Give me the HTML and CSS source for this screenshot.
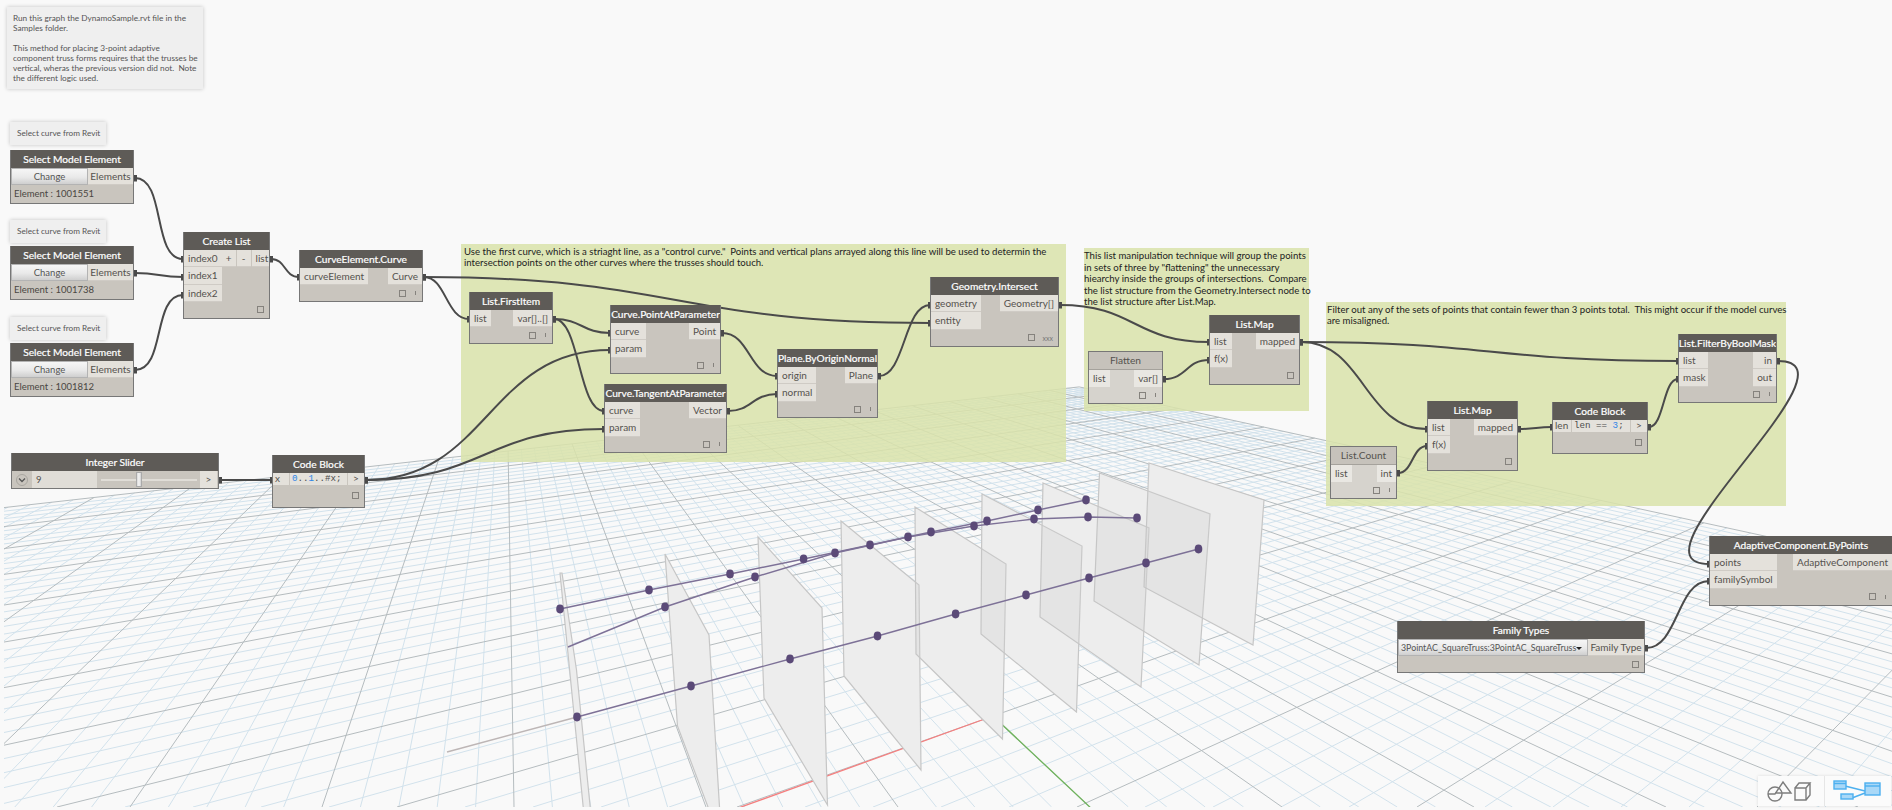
FILE: index.html
```html
<!DOCTYPE html>
<html lang="en">
<head>
  <meta charset="UTF-8">
  <title>Dynamo graph</title>
  <link rel="stylesheet" href="styles.css">
</head>
<body>
  <div class="canvas">

    <!-- background 3d preview -->
    <svg class="scene" viewBox="4 0 1888 807">
      <g id="gridlines"></g>
      <line class="axis axis--x" x1="993" y1="716" x2="730" y2="811"/>
      <line class="axis axis--y" x1="993" y1="716" x2="1094" y2="811"/>
      <polyline class="curve-ext" points="447,752 577,717"/>
      <g class="planes-back">
        <polygon points="560,573 562,573 576.5,670 591,815 584,815"/>
        <polygon points="665,554 709,635 720,815 711,815 677.5,726"/>
        <polygon points="758,537 822,608 827.5,805 764,698"/>
        <polygon points="841,521 919,585 921,770 844,676"/>
        <polygon points="915,507 1006,564 1002.5,739 916,654"/>
        <polygon points="982,494 1082,546 1076.5,712 981,634"/>
        <polygon points="1043,483 1149,528 1141,687 1040,617"/>
        <polygon points="1099.5,473 1210,514 1199,665 1094,601"/>
        <polygon points="1149,463 1264,500 1253,645 1144,587"/>
      </g>
      <g class="planes">
        <polygon points="560,573 562,573 576.5,670 591,815 584,815"/>
        <polygon points="665,554 709,635 720,815 711,815 677.5,726"/>
        <polygon points="758,537 822,608 827.5,805 764,698"/>
        <polygon points="841,521 919,585 921,770 844,676"/>
        <polygon points="915,507 1006,564 1002.5,739 916,654"/>
        <polygon points="982,494 1082,546 1076.5,712 981,634"/>
        <polygon points="1043,483 1149,528 1141,687 1040,617"/>
        <polygon points="1099.5,473 1210,514 1199,665 1094,601"/>
        <polygon points="1149,463 1264,500 1253,645 1144,587"/>
      </g>
      <polyline class="truss" points="560,609 649,590 730,574 803.6,559 870,545 931,532 987,521 1038,510 1086,500"/>
      <polyline class="truss" points="568,647 665,607 755,577 835,553 908,537 974,526 1034,519 1088,517 1137,518"/>
      <polyline class="truss" points="577,717 691,686 790,659 877.5,636 955.6,614 1026,595 1089,578 1146,563 1198.5,549"/>
      <g class="dots">
        <ellipse cx="560" cy="609" rx="3.8" ry="4.4"/><ellipse cx="649" cy="590" rx="3.8" ry="4.4"/><ellipse cx="730" cy="574" rx="3.8" ry="4.4"/>
        <ellipse cx="803.6" cy="559" rx="3.8" ry="4.4"/><ellipse cx="870" cy="545" rx="3.8" ry="4.4"/><ellipse cx="931" cy="532" rx="3.8" ry="4.4"/>
        <ellipse cx="987" cy="521" rx="3.8" ry="4.4"/><ellipse cx="1038" cy="510" rx="3.8" ry="4.4"/><ellipse cx="1086" cy="500" rx="3.8" ry="4.4"/>
        <ellipse cx="665" cy="607" rx="3.8" ry="4.4"/><ellipse cx="755" cy="577" rx="3.8" ry="4.4"/><ellipse cx="835" cy="553" rx="3.8" ry="4.4"/>
        <ellipse cx="908" cy="537" rx="3.8" ry="4.4"/><ellipse cx="974" cy="526" rx="3.8" ry="4.4"/><ellipse cx="1034" cy="519" rx="3.8" ry="4.4"/>
        <ellipse cx="1088" cy="517" rx="3.8" ry="4.4"/><ellipse cx="1137" cy="518" rx="3.8" ry="4.4"/>
        <ellipse cx="577" cy="717" rx="3.8" ry="4.4"/><ellipse cx="691" cy="686" rx="3.8" ry="4.4"/><ellipse cx="790" cy="659" rx="3.8" ry="4.4"/>
        <ellipse cx="877.5" cy="636" rx="3.8" ry="4.4"/><ellipse cx="955.6" cy="614" rx="3.8" ry="4.4"/><ellipse cx="1026" cy="595" rx="3.8" ry="4.4"/>
        <ellipse cx="1089" cy="578" rx="3.8" ry="4.4"/><ellipse cx="1146" cy="563" rx="3.8" ry="4.4"/><ellipse cx="1198.5" cy="549" rx="3.8" ry="4.4"/>
      </g>
    </svg>

    <!-- groups -->
    <div class="group group-a">Use the first curve, which is a striaght line, as a "control curve."&nbsp; Points and vertical plans arrayed along this line will be used to determin the<br>intersection points on the other curves where the trusses should touch.</div>
    <div class="group group-b">This list manipulation technique will group the points<br>in sets of three by "flattening" the unnecessary<br>hiearchy inside the groups of intersections.&nbsp; Compare<br>the list structure from the Geometry.Intersect node to<br>the list structure after List.Map.</div>
    <div class="group group-c">Filter out any of the sets of points that contain fewer than 3 points total.&nbsp; This might occur if the model curves<br>are misaligned.</div>

    <!-- notes -->
    <div class="note note-top">Run this graph the DynamoSample.rvt file in the<br>Samples folder.<br><br>This method for placing 3-point adaptive<br>component truss forms requires that the trusses be<br>vertical, wheras the previous version did not.&nbsp; Note<br>the different logic used.</div>
    <div class="note note-small note-1">Select curve from Revit</div>
    <div class="note note-small note-2">Select curve from Revit</div>
    <div class="note note-small note-3">Select curve from Revit</div>

    <!-- wires -->
    <svg class="wires" viewBox="0 0 1892 810">
      <defs>
        <marker id="nub" markerUnits="userSpaceOnUse" markerWidth="4" markerHeight="7" refX="2" refY="3.5" orient="auto">
          <rect width="4" height="7" fill="#4a4a4a"/>
        </marker>
      </defs>
      <path d="M135 178C166 178 152 259 183 259"/>
      <path d="M135 273C160 273 158 277 183 277"/>
      <path d="M135 370C166 370 152 295 183 295"/>
      <path d="M271 259C286 259 284 277 299 277"/>
      <path d="M424 277C676 277 676 323 930 323"/>
      <path d="M424 277C446 277 446 319 469 319"/>
      <path d="M554 319C582 319 582 333 610 333"/>
      <path d="M554 319C580 319 578 411 604 411"/>
      <path d="M366 480C488 480 488 350 610 350"/>
      <path d="M366 480C486 480 484 429 604 429"/>
      <path d="M722 333C750 333 749 376 777 376"/>
      <path d="M728 411C752 411 752 394 777 394"/>
      <path d="M879 376C905 376 904 305 930 305"/>
      <path d="M1060 305C1135 305 1134 342 1209 342"/>
      <path d="M1164 379C1187 379 1186 360 1209 360"/>
      <path d="M1301 342C1490 342 1489 361 1678 361"/>
      <path d="M1301 342C1364 342 1364 429 1427 429"/>
      <path d="M1398 473C1413 473 1412 446 1427 446"/>
      <path d="M1519 429C1536 429 1536 427 1552 427"/>
      <path d="M1649 427C1664 427 1663 379 1678 379"/>
      <path d="M1778 361C1868 361 1619 564 1709 564"/>
      <path d="M1646 648C1678 648 1677 581 1709 581"/>
      <path d="M220 480C246 480 246 480 272 480"/>
    </svg>

    <!-- nodes -->
    <div class="node n-select-1">
      <div class="node__title">Select Model Element</div>
      <div class="node__body">
        <button class="btn btn--change">Change</button>
        <span class="port port--out">Elements</span>
      </div>
      <div class="node__info">Element : 1001551</div>
    </div>
    <div class="node n-select-2">
      <div class="node__title">Select Model Element</div>
      <div class="node__body">
        <button class="btn btn--change">Change</button>
        <span class="port port--out">Elements</span>
      </div>
      <div class="node__info">Element : 1001738</div>
    </div>
    <div class="node n-select-3">
      <div class="node__title">Select Model Element</div>
      <div class="node__body">
        <button class="btn btn--change">Change</button>
        <span class="port port--out">Elements</span>
      </div>
      <div class="node__info">Element : 1001812</div>
    </div>

    <div class="node n-create-list">
      <div class="node__title">Create List</div>
      <div class="node__body">
        <div class="node__col">
          <span class="port">index0</span>
          <span class="port">index1</span>
          <span class="port">index2</span>
        </div>
        <div class="node__row">
          <span class="port port--btn">+</span>
          <span class="port port--btn">-</span>
          <span class="port">list</span>
        </div>
      </div>
      <div class="node__foot"><i class="box"></i></div>
    </div>

    <div class="node n-curve-element">
      <div class="node__title">CurveElement.Curve</div>
      <div class="node__body">
        <div class="node__col"><span class="port">curveElement</span></div>
        <div class="node__col"><span class="port">Curve</span></div>
      </div>
      <div class="node__foot"><i class="box"></i><i class="tick"></i></div>
    </div>

    <div class="node n-slider">
      <div class="node__title">Integer Slider</div>
      <div class="slider">
        <span class="slider__toggle">
          <svg width="8" height="6" viewBox="0 0 8 6"><path d="M1 1.5L4 4.5L7 1.5" fill="none" stroke="#555" stroke-width="1.3"/></svg>
        </span>
        <span class="slider__value">9</span>
        <span class="slider__track"><i class="slider__thumb"></i></span>
        <span class="port slider__out">&gt;</span>
      </div>
    </div>

    <div class="node n-code-1">
      <div class="node__title">Code Block</div>
      <div class="code">
        <span class="port port--code">x</span>
        <span class="code__text code__text--a"><b>0</b>..<b>1</b>..#x;</span>
        <span class="port port--code code__out">&gt;</span>
      </div>
      <div class="node__foot node__foot--code"><i class="box"></i></div>
    </div>

    <div class="node n-first-item">
      <div class="node__title">List.FirstItem</div>
      <div class="node__body">
        <div class="node__col"><span class="port">list</span></div>
        <div class="node__col"><span class="port">var[]..[]</span></div>
      </div>
      <div class="node__foot"><i class="box"></i><i class="tick"></i></div>
    </div>

    <div class="node n-point-at">
      <div class="node__title">Curve.PointAtParameter</div>
      <div class="node__body">
        <div class="node__col"><span class="port">curve</span><span class="port">param</span></div>
        <div class="node__col"><span class="port">Point</span></div>
      </div>
      <div class="node__foot"><i class="box"></i><i class="tick"></i></div>
    </div>

    <div class="node n-tangent-at">
      <div class="node__title">Curve.TangentAtParameter</div>
      <div class="node__body">
        <div class="node__col"><span class="port">curve</span><span class="port">param</span></div>
        <div class="node__col"><span class="port">Vector</span></div>
      </div>
      <div class="node__foot"><i class="box"></i><i class="tick"></i></div>
    </div>

    <div class="node n-plane">
      <div class="node__title">Plane.ByOriginNormal</div>
      <div class="node__body">
        <div class="node__col"><span class="port">origin</span><span class="port">normal</span></div>
        <div class="node__col"><span class="port">Plane</span></div>
      </div>
      <div class="node__foot"><i class="box"></i><i class="tick"></i></div>
    </div>

    <div class="node n-intersect">
      <div class="node__title">Geometry.Intersect</div>
      <div class="node__body">
        <div class="node__col"><span class="port">geometry</span><span class="port">entity</span></div>
        <div class="node__col"><span class="port">Geometry[]</span></div>
      </div>
      <div class="node__foot"><i class="box"></i><i class="xxx">xxx</i></div>
    </div>

    <div class="node node--ref n-flatten">
      <div class="node__title">Flatten</div>
      <div class="node__body">
        <div class="node__col"><span class="port">list</span></div>
        <div class="node__col"><span class="port">var[]</span></div>
      </div>
      <div class="node__foot"><i class="box"></i><i class="tick"></i></div>
    </div>

    <div class="node n-map-1">
      <div class="node__title">List.Map</div>
      <div class="node__body">
        <div class="node__col"><span class="port">list</span><span class="port">f(x)</span></div>
        <div class="node__col"><span class="port">mapped</span></div>
      </div>
      <div class="node__foot"><i class="box"></i></div>
    </div>

    <div class="node node--ref n-count">
      <div class="node__title">List.Count</div>
      <div class="node__body">
        <div class="node__col"><span class="port">list</span></div>
        <div class="node__col"><span class="port">int</span></div>
      </div>
      <div class="node__foot"><i class="box"></i><i class="tick"></i></div>
    </div>

    <div class="node n-map-2">
      <div class="node__title">List.Map</div>
      <div class="node__body">
        <div class="node__col"><span class="port">list</span><span class="port">f(x)</span></div>
        <div class="node__col"><span class="port">mapped</span></div>
      </div>
      <div class="node__foot"><i class="box"></i></div>
    </div>

    <div class="node n-code-2">
      <div class="node__title">Code Block</div>
      <div class="code">
        <span class="port port--code port--len">len</span>
        <span class="code__text code__text--b">len == <b>3</b>;</span>
        <span class="port port--code code__out">&gt;</span>
      </div>
      <div class="node__foot node__foot--code"><i class="box"></i></div>
    </div>

    <div class="node n-filter">
      <div class="node__title">List.FilterByBoolMask</div>
      <div class="node__body">
        <div class="node__col node__col--mask"><span class="port">list</span><span class="port">mask</span></div>
        <div class="node__col"><span class="port">in</span><span class="port">out</span></div>
      </div>
      <div class="node__foot"><i class="box"></i><i class="tick"></i></div>
    </div>

    <div class="node n-adaptive">
      <div class="node__title">AdaptiveComponent.ByPoints</div>
      <div class="node__body">
        <div class="node__col"><span class="port">points</span><span class="port">familySymbol</span></div>
        <div class="node__col"><span class="port">AdaptiveComponent</span></div>
      </div>
      <div class="node__foot"><i class="box"></i><i class="tick"></i></div>
    </div>

    <div class="node n-family">
      <div class="node__title">Family Types</div>
      <div class="node__body">
        <span class="btn btn--select">3PointAC_SquareTruss:3PointAC_SquareTruss<i class="caret"></i></span>
        <span class="port port--out">Family Type</span>
      </div>
      <div class="node__foot"><i class="box"></i></div>
    </div>

    <!-- geometry / graph switch -->
    <div class="view-switch">
      <div class="view-switch__cell">
        <svg width="50" height="24" viewBox="0 0 50 24" fill="none" stroke="#7d7d7d" stroke-width="1.4">
          <circle cx="9" cy="15" r="7"/>
          <path d="M2 15H9L17 3L25 14H9"/>
          <path d="M29 9H40V21H29ZM29 9L33 4H44L40 9M44 4V16L40 21"/>
        </svg>
      </div>
      <div class="view-switch__cell">
        <svg width="52" height="24" viewBox="0 0 52 24" fill="#a9d8f7" stroke="#4db0ef" stroke-width="1.4">
          <path d="M13 7L33 12M20 19L33 14" fill="none"/>
          <rect x="2" y="2" width="12" height="8"/>
          <path d="M2 4.5H14" fill="none"/>
          <rect x="9" y="15" width="12" height="5"/>
          <rect x="33" y="4" width="15" height="12"/>
          <path d="M33 7H48" fill="none"/>
        </svg>
      </div>
    </div>
  </div>

  <script src="grid.js"></script>
</body>
</html>
```

FILE: styles.css
```css
html, body {
  margin: 0;
  height: 100%;
  overflow: hidden;
}

body {
  background: #f9f9f9;
  font-family: "Lato", "Open Sans", sans-serif;
  color: #4b4b4b;
}

.canvas {
  position: relative;
  width: 1892px;
  height: 810px;
  overflow: hidden;
}

/* 3d preview */
.scene {
  position: absolute;
  left: 4px;
  top: 0;
  width: 1888px;
  height: 807px;
}

.grid-minor {
  stroke: #d2e2ec;
  stroke-width: 1;
}

.grid-major {
  stroke: #b5bcbf;
  stroke-width: 1;
}

.axis {
  stroke-width: 1.3;
}

.axis--x {
  stroke: #f57f7f;
}

.axis--y {
  stroke: #6fb35c;
}

.curve-ext {
  stroke: #bdb6b6;
  stroke-width: 1.5;
  fill: none;
}

.planes-back polygon {
  fill: #f9f9f9;
}

.planes polygon {
  fill: #d0d0d0;
  fill-opacity: 0.3;
  stroke: #c6c6c6;
  stroke-width: 1.2;
}

.truss {
  fill: none;
  stroke: #7d7197;
  stroke-width: 1.4;
}

.dots ellipse {
  fill: #5b4a78;
}

/* groups */
.group {
  position: absolute;
  box-sizing: border-box;
  background: rgba(217, 227, 170, 0.85);
  color: #222;
  font-size: 9.6px;
  line-height: 11.2px;
  padding: 2px 1px 0 3px;
  white-space: nowrap;
}

.group-a {
  left: 461px;
  top: 244px;
  width: 605px;
  height: 218px;
}

.group-b {
  left: 1084px;
  top: 248px;
  width: 225px;
  height: 163px;
  padding-left: 0;
  line-height: 11.5px;
}

.group-c {
  left: 1326px;
  top: 302px;
  width: 460px;
  height: 204px;
  padding-left: 1px;
}

/* notes */
.note {
  position: absolute;
  box-sizing: border-box;
  background: #efefef;
  box-shadow: 0 0 4px rgba(0, 0, 0, 0.22);
  color: #555;
  white-space: nowrap;
}

.note-top {
  left: 7px;
  top: 7px;
  width: 196px;
  height: 82px;
  padding: 6px 0 0 6px;
  font-size: 8.25px;
  line-height: 10px;
}

.note-small {
  left: 10px;
  width: 96px;
  height: 23px;
  padding-left: 7px;
  font-size: 8.2px;
  line-height: 23px;
}

.note-1 { top: 122px; }
.note-2 { top: 220px; }
.note-3 { top: 317px; }

/* wires */
.wires {
  position: absolute;
  left: 0;
  top: 0;
  width: 1892px;
  height: 810px;
}

.wires path {
  fill: none;
  stroke: #4a4a4a;
  stroke-width: 2;
  marker-start: url(#nub);
  marker-end: url(#nub);
}

/* nodes */
.node {
  position: absolute;
  box-sizing: border-box;
  display: flex;
  flex-direction: column;
  background: #c9c5be;
  border: 1px solid #777;
  border-top: 0;
  font-size: 10px;
  color: #55524e;
  overflow: hidden;
}

.node__title {
  height: 18px;
  flex: none;
  margin: 0 -1px;
  background: #5e5b57;
  color: #fff;
  font-size: 10.2px;
  -webkit-text-stroke: 0.2px #fff;
  line-height: 18px;
  text-align: center;
  white-space: nowrap;
}

.node__body {
  display: flex;
  justify-content: space-between;
  flex: none;
}

.node__col {
  display: flex;
  flex-direction: column;
}

.node__row {
  display: flex;
  gap: 1px;
}

.port {
  box-sizing: border-box;
  display: block;
  height: 17.33px;
  padding: 0 4px;
  background: #e4e1db;
  border-bottom: 1px solid #cfcbc5;
  line-height: 16px;
  white-space: nowrap;
}

.node__col:last-child .port {
  text-align: right;
}

.port--btn {
  width: 14px;
  padding: 0;
  text-align: center;
}

.port--out {
  flex: 1;
  text-align: center;
  padding: 0 1px;
}

.node__foot {
  flex: 1;
  display: flex;
  justify-content: flex-end;
  align-items: center;
  gap: 8px;
  padding-right: 5px;
}

.node__foot--code {
  padding-bottom: 1px;
}

.box {
  width: 5px;
  height: 5px;
  border: 1px solid #85827d;
}

.tick {
  width: 1px;
  height: 4px;
  margin: 0 1px;
  background: #85827d;
}

.xxx {
  font-size: 7px;
  font-style: normal;
  color: #777;
}

.node__info {
  flex: 1;
  padding-left: 3px;
  font-size: 9.5px;
  line-height: 17px;
  color: #4a4742;
  white-space: nowrap;
}

.node--ref {
  background: #d6d3cd;
  border-top: 1px solid #777;
}

.node--ref .node__title {
  height: 17px;
  background: #c6c2bb;
  border-bottom: 1px solid #a5a29c;
  color: #55524e;
  -webkit-text-stroke: 0;
  line-height: 17px;
}

.node--ref .port {
  background: #e9e7e2;
  border-bottom: 0;
}

.btn {
  box-sizing: border-box;
  display: block;
  height: 17px;
  padding: 0;
  border: 1px solid #b3b3b3;
  background: linear-gradient(#f6f6f6, #e9e9e9 55%, #cfcfcf);
  color: #555;
  font: inherit;
  font-size: 9.5px;
  line-height: 15px;
  text-align: center;
}

.btn--change {
  width: 77px;
}

.btn--select {
  position: relative;
  width: 190px;
  padding-left: 2px;
  font-size: 8.8px;
  text-align: left;
  white-space: nowrap;
}

.caret {
  position: absolute;
  right: 5px;
  top: 7px;
  border: 3px solid transparent;
  border-top-color: #222;
  border-bottom: 0;
}

/* slider */
.slider {
  display: flex;
  align-items: stretch;
  height: 17px;
}

.slider__toggle {
  flex: none;
  box-sizing: border-box;
  width: 12px;
  height: 12px;
  margin: 3px 4px 0 4px;
  border: 1px solid #aaa7a1;
  border-radius: 50%;
  display: flex;
  align-items: center;
  justify-content: center;
}

.slider__value {
  flex: none;
  width: 65px;
  background: #e0ddd7;
  padding-left: 4px;
  box-sizing: border-box;
  line-height: 17px;
  font-size: 9.5px;
}

.slider__track {
  flex: none;
  position: relative;
  width: 96px;
  height: 2px;
  margin: 8px 3px 0 4px;
  background: #e0ddd7;
}

.slider__thumb {
  position: absolute;
  left: 35px;
  top: -7px;
  width: 6px;
  height: 15px;
  background: linear-gradient(90deg, #d9d9d9, #f5f5f5, #cfcfcf);
  border: 1px solid #aaa;
  box-sizing: border-box;
}

.slider__out {
  flex: none;
  width: 17px;
  height: 17px;
  padding: 0;
  text-align: center;
  border-bottom: 0;
}

/* code blocks */
.code {
  display: flex;
  gap: 1px;
  height: 12px;
}

.port--code {
  flex: none;
  width: 16px;
  height: 12px;
  padding: 0 0 0 2px;
  line-height: 11px;
  border-bottom: 0;
}

.port--len {
  width: 18px;
}

.code__text {
  flex: 1;
  background: #e4e1db;
  font-family: "Liberation Mono", monospace;
  font-size: 9.2px;
  line-height: 11px;
  padding-left: 2px;
  color: #4a4a4a;
  white-space: nowrap;
}

.code__text b {
  font-weight: 400;
  color: #2e84e6;
}

.code__out {
  padding: 0;
  text-align: center;
  width: 16px;
}

.node__col--mask {
  width: 29px;
}

/* where each node sits on the graph */
.n-select-1 { left: 10px; top: 150px; width: 124px; height: 54px; }
.n-select-2 { left: 10px; top: 246px; width: 124px; height: 54px; }
.n-select-3 { left: 10px; top: 343px; width: 124px; height: 54px; }
.n-create-list { left: 183px; top: 232px; width: 87px; height: 87px; }
.n-curve-element { left: 299px; top: 250px; width: 124px; height: 52px; }
.n-slider { left: 11px; top: 453px; width: 208px; height: 36px; }
.n-code-1 { left: 272px; top: 455px; width: 93px; height: 53px; }
.n-first-item { left: 469px; top: 292px; width: 84px; height: 52px; }
.n-point-at { left: 610px; top: 305px; width: 111px; height: 69px; }
.n-tangent-at { left: 604px; top: 384px; width: 123px; height: 69px; }
.n-plane { left: 777px; top: 349px; width: 101px; height: 69px; }
.n-intersect { left: 930px; top: 277px; width: 129px; height: 70px; }
.n-flatten { left: 1088px; top: 351px; width: 75px; height: 53px; }
.n-map-1 { left: 1209px; top: 315px; width: 91px; height: 70px; }
.n-count { left: 1330px; top: 446px; width: 67px; height: 53px; }
.n-map-2 { left: 1427px; top: 401px; width: 91px; height: 70px; }
.n-code-2 { left: 1552px; top: 402px; width: 96px; height: 52px; }
.n-filter { left: 1678px; top: 334px; width: 99px; height: 69px; }
.n-adaptive { left: 1709px; top: 536px; width: 184px; height: 70px; }
.n-family { left: 1397px; top: 621px; width: 248px; height: 52px; }

/* bottom right switch */
.view-switch {
  position: absolute;
  left: 1758px;
  top: 776px;
  display: flex;
  gap: 1px;
  background: #e6e6e6;
  box-shadow: 0 0 3px rgba(0, 0, 0, 0.12);
}

.view-switch__cell {
  width: 66px;
  height: 30px;
  display: flex;
  align-items: center;
  justify-content: center;
  background: #fbfbfb;
}
```

FILE: grid.js
```js
// perspective grid, 100 x 100 cells, a heavier line every 5
const svgNS = 'http://www.w3.org/2000/svg';
const gridlines = document.getElementById('gridlines');

const vanishRight = [2308, 249];
const vanishLeft = [505, 262];
const baseY = 807;
const edge = 50;

const rightLine = i => [vanishRight, [737 + 68 * i, baseY]];
const leftLine = j => [vanishLeft, [1090 + 38.4 * j, baseY]];

function meet(a, b) {
  const [[x1, y1], [x2, y2]] = a;
  const [[x3, y3], [x4, y4]] = b;
  const d = (x1 - x2) * (y3 - y4) - (y1 - y2) * (x3 - x4);
  const p = x1 * y2 - y1 * x2;
  const q = x3 * y4 - y3 * x4;
  return [(p * (x3 - x4) - (x1 - x2) * q) / d, (p * (y3 - y4) - (y1 - y2) * q) / d];
}

function addLine(from, to, cls) {
  const l = document.createElementNS(svgNS, 'line');
  l.setAttribute('x1', from[0].toFixed(1));
  l.setAttribute('y1', from[1].toFixed(1));
  l.setAttribute('x2', to[0].toFixed(1));
  l.setAttribute('y2', to[1].toFixed(1));
  l.setAttribute('class', cls);
  gridlines.appendChild(l);
}

// minor lines first so the major ones end up on top
// each line runs from the far edge of the grid down to the bottom of the view
[false, true].forEach(major => {
  for (let n = -edge; n <= edge; n++) {
    if ((n % 5 === 0) !== major) continue;
    const cls = major ? 'grid-major' : 'grid-minor';
    const a = rightLine(n);
    const b = leftLine(n);
    addLine(meet(a, leftLine(edge)), a[1], cls);
    addLine(meet(b, rightLine(-edge)), b[1], cls);
  }
});
```
